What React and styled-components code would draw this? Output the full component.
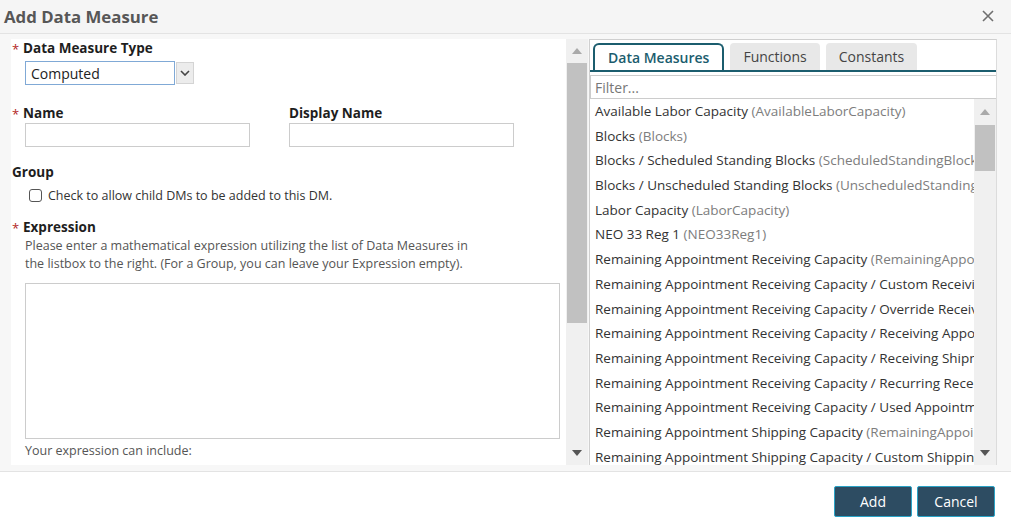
import React from "react"
import styled, { createGlobalStyle } from "styled-components"

const GlobalStyle = createGlobalStyle`
    html, body {
        margin: 0;
        padding: 0;
        background: #ffffff;
    }
    body {
        font-family: "Open Sans", "Liberation Sans", sans-serif;
        color: #222;
    }
    * {
        box-sizing: border-box;
    }
`;

const Dialog = styled.div`
    width: 1011px;
    height: 531px;
    display: flex;
    flex-direction: column;
    background: #fff;
    overflow: hidden;
`;

const Header = styled.div`
    height: 34px;
    flex: none;
    display: flex;
    align-items: center;
    justify-content: space-between;
    padding: 0 16px 1px 4px;
    background: #f5f5f5;
    border-bottom: 1px solid #e3e3e3;
`;

const Title = styled.h2`
    margin: 0;
    font-size: 16.8px;
    font-weight: 700;
    color: #575757;
`;

const CloseButton = styled.button`
    width: 14px;
    height: 14px;
    padding: 0;
    border: none;
    background: none;
    display: flex;
    align-items: center;
    justify-content: center;
    cursor: pointer;
`;

const Body = styled.div`
    height: 438px;
    flex: none;
    display: flex;
    padding: 5px 14px 6px 11px;
    background: #f7f7f7;
    border-bottom: 1px solid #e3e3e3;
`;

const FormPane = styled.div`
    width: 555px;
    flex: none;
    display: flex;
    flex-direction: column;
    padding-left: 1px;
    background: #fff;
    overflow: hidden;
`;

const Label = styled.div`
    height: 19px;
    flex: none;
    display: flex;
    align-items: flex-start;
    margin-top: ${p => p.$top || 0}px;
    font-size: 13.5px;
    line-height: 19px;
    font-weight: 700;
    color: #1e1e1e;
`;

const Star = styled.span`
    width: 11px;
    font-size: 13px;
    line-height: 21px;
    font-weight: 400;
    color: #b3261e;
`;

const SelectRow = styled.div`
    display: flex;
    align-items: center;
    margin: 3px 0 0 13px;
`;

const SelectBox = styled.div`
    width: 150px;
    height: 24px;
    display: flex;
    align-items: center;
    padding-left: 5px;
    border: 1px solid #80a9d6;
    font-size: 14px;
    color: #222;
`;

const SelectButton = styled.div`
    width: 18px;
    height: 22px;
    margin-left: 1px;
    display: flex;
    align-items: center;
    justify-content: center;
    background: #ececec;
    border: 1px solid #d4d4d4;
`;

const FieldRow = styled.div`
    display: flex;
    margin-top: 19px;
`;

const Field = styled.div`
    width: ${p => p.$width}px;
    display: flex;
    flex-direction: column;
`;

const TextInput = styled.input`
    width: 225px;
    height: 24px;
    margin-left: ${p => p.$indent || 0}px;
    border: 1px solid #cccccc;
    outline: none;
    font: inherit;
`;

const CheckRow = styled.label`
    display: flex;
    align-items: center;
    gap: 6px;
    height: 18px;
    margin: 4px 0 0 17px;
    font-size: 12.5px;
    color: #333;
`;

const CheckBox = styled.span`
    width: 13px;
    height: 13px;
    border: 1px solid #555;
    border-radius: 3px;
    background: #fff;
`;

const Help = styled.p`
    margin: ${p => p.$top || 0}px 0 0 13px;
    font-size: 12.5px;
    line-height: 18px;
    color: #555;
`;

const ExpressionBox = styled.textarea`
    width: 535px;
    height: 156px;
    flex: none;
    margin: 10px 0 0 13px;
    border: 1px solid #cccccc;
    resize: none;
    outline: none;
`;

const ScrollTrack = styled.div`
    width: 22px;
    flex: none;
    display: flex;
    flex-direction: column;
    background: #f0f0f0;
`;

const ArrowCell = styled.div`
    height: ${p => p.$h}px;
    flex: none;
    display: flex;
    align-items: center;
    justify-content: center;
`;

const Thumb = styled.div`
    height: ${p => p.$h}px;
    margin: 0 1px;
    background: #c1c1c1;
`;

const Spacer = styled.div`
    flex: 1;
`;

const Picker = styled.div`
    width: 408px;
    flex: none;
    margin-left: 1px;
    display: flex;
    flex-direction: column;
    background: #fff;
    border-top: 1px solid #cfcfcf;
    border-left: 1px solid #cfcfcf;
    border-right: 1px solid #dcdcdc;
`;

const TabStrip = styled.div`
    height: 32px;
    flex: none;
    display: flex;
    align-items: flex-end;
    gap: 6px;
    padding-left: 3px;
    border-bottom: 2px solid #1b5d6e;
`;

const Tab = styled.div`
    height: 27px;
    display: flex;
    align-items: center;
    padding: 0 13px;
    font-size: 14px;
    font-weight: ${p => (p.$active ? 600 : 400)};
    color: ${p => (p.$active ? "#1b5d6e" : "#444")};
    background: ${p => (p.$active ? "#fff" : "#e8e8e8")};
    border: ${p => (p.$active ? "2px solid #1b5d6e" : "none")};
    border-bottom: none;
    border-radius: ${p => (p.$active ? "6px 6px 0 0" : "4px 4px 0 0")};
`;

const Filter = styled.input`
    height: 24px;
    flex: none;
    margin-top: 3px;
    padding-left: 4px;
    border: 1px solid #cccccc;
    border-right: none;
    outline: none;
    font: inherit;
    font-size: 14px;
    &::placeholder {
        color: #777;
    }
`;

const ListBox = styled.div`
    flex: 1;
    display: flex;
    min-height: 0;
`;

const Items = styled.ul`
    flex: 1;
    margin: 0;
    padding: 0;
    list-style: none;
    overflow: hidden;
`;

const Item = styled.li`
    height: 24.7px;
    line-height: 25px;
    padding-left: 5px;
    white-space: nowrap;
    overflow: hidden;
    font-size: 13.5px;
    color: #333;
`;

const Code = styled.span`
    color: #7d7d7d;
`;

const Footer = styled.div`
    flex: 1;
    display: flex;
    justify-content: flex-end;
    align-items: flex-start;
    gap: 5px;
    padding: 14px 16px 0 0;
`;

const Button = styled.button`
    width: 78px;
    height: 31px;
    border: 1px solid #2aa3c6;
    border-radius: 2px;
    background: #2d4c62;
    color: #fff;
    font-family: inherit;
    font-size: 14px;
    cursor: pointer;
`;

const UpArrow = () => (
    <svg width="10" height="6" viewBox="0 0 10 6"><path d="M0 6 L5 0 L10 6 Z" fill="#a9a9a9" /></svg>
);

const DownArrow = () => (
    <svg width="10" height="6" viewBox="0 0 10 6"><path d="M0 0 L5 6 L10 0 Z" fill="#555" /></svg>
);

const Scrollbar = ({ top, thumb }) => (
    <ScrollTrack>
        <ArrowCell $h={top}><UpArrow /></ArrowCell>
        <Thumb $h={thumb} />
        <Spacer />
        <ArrowCell $h={25}><DownArrow /></ArrowCell>
    </ScrollTrack>
);

const measures = [
    ["Available Labor Capacity", "AvailableLaborCapacity"],
    ["Blocks", "Blocks"],
    ["Blocks / Scheduled Standing Blocks", "ScheduledStandingBlocks"],
    ["Blocks / Unscheduled Standing Blocks", "UnscheduledStandingBlocks"],
    ["Labor Capacity", "LaborCapacity"],
    ["NEO 33 Reg 1", "NEO33Reg1"],
    ["Remaining Appointment Receiving Capacity", "RemainingAppointmentReceivingCapacity"],
    ["Remaining Appointment Receiving Capacity / Custom Receiving Capacity", "CustomReceivingCapacity"],
    ["Remaining Appointment Receiving Capacity / Override Receiving Capacity", "OverrideReceivingCapacity"],
    ["Remaining Appointment Receiving Capacity / Receiving Appointments", "ReceivingAppointments"],
    ["Remaining Appointment Receiving Capacity / Receiving Shipments", "ReceivingShipments"],
    ["Remaining Appointment Receiving Capacity / Recurring Receiving Capacity", "RecurringReceivingCapacity"],
    ["Remaining Appointment Receiving Capacity / Used Appointments", "UsedAppointments"],
    ["Remaining Appointment Shipping Capacity", "RemainingAppointmentShippingCapacity"],
    ["Remaining Appointment Shipping Capacity / Custom Shipping Capacity", "CustomShippingCapacity"],
];

const App = () => {
    return (
        <Dialog>
            <GlobalStyle />
            <Header>
                <Title>Add Data Measure</Title>
                <CloseButton aria-label="Close">
                    <svg width="12" height="12" viewBox="0 0 12 12">
                        <path d="M1 1 L11 11 M11 1 L1 11" stroke="#6f6f6f" strokeWidth="1.6" />
                    </svg>
                </CloseButton>
            </Header>
            <Body>
                <FormPane>
                    <Label><Star>*</Star>Data Measure Type</Label>
                    <SelectRow>
                        <SelectBox>Computed</SelectBox>
                        <SelectButton>
                            <svg width="10" height="6" viewBox="0 0 10 6">
                                <path d="M1 1 L5 5 L9 1" stroke="#444" strokeWidth="1.6" fill="none" />
                            </svg>
                        </SelectButton>
                    </SelectRow>
                    <FieldRow>
                        <Field $width={277}>
                            <Label><Star>*</Star>Name</Label>
                            <TextInput $indent={13} />
                        </Field>
                        <Field $width={240}>
                            <Label>Display Name</Label>
                            <TextInput />
                        </Field>
                    </FieldRow>
                    <Label $top={16}>Group</Label>
                    <CheckRow>
                        <CheckBox />
                        Check to allow child DMs to be added to this DM.
                    </CheckRow>
                    <Label $top={14}><Star>*</Star>Expression</Label>
                    <Help>
                        Please enter a mathematical expression utilizing the list of Data Measures in
                        <br />
                        the listbox to the right. (For a Group, you can leave your Expression empty).
                    </Help>
                    <ExpressionBox />
                    <Help $top={3}>Your expression can include:</Help>
                </FormPane>
                <Scrollbar top={24} thumb={260} />
                <Picker>
                    <TabStrip>
                        <Tab $active>Data Measures</Tab>
                        <Tab>Functions</Tab>
                        <Tab>Constants</Tab>
                    </TabStrip>
                    <Filter placeholder="Filter..." />
                    <ListBox>
                        <Items>
                            {measures.map(([name, code]) => (
                                <Item key={name}>
                                    {name} <Code>({code})</Code>
                                </Item>
                            ))}
                        </Items>
                        <Scrollbar top={26} thumb={46} />
                    </ListBox>
                </Picker>
            </Body>
            <Footer>
                <Button>Add</Button>
                <Button>Cancel</Button>
            </Footer>
        </Dialog>
    )
}

export default App;
